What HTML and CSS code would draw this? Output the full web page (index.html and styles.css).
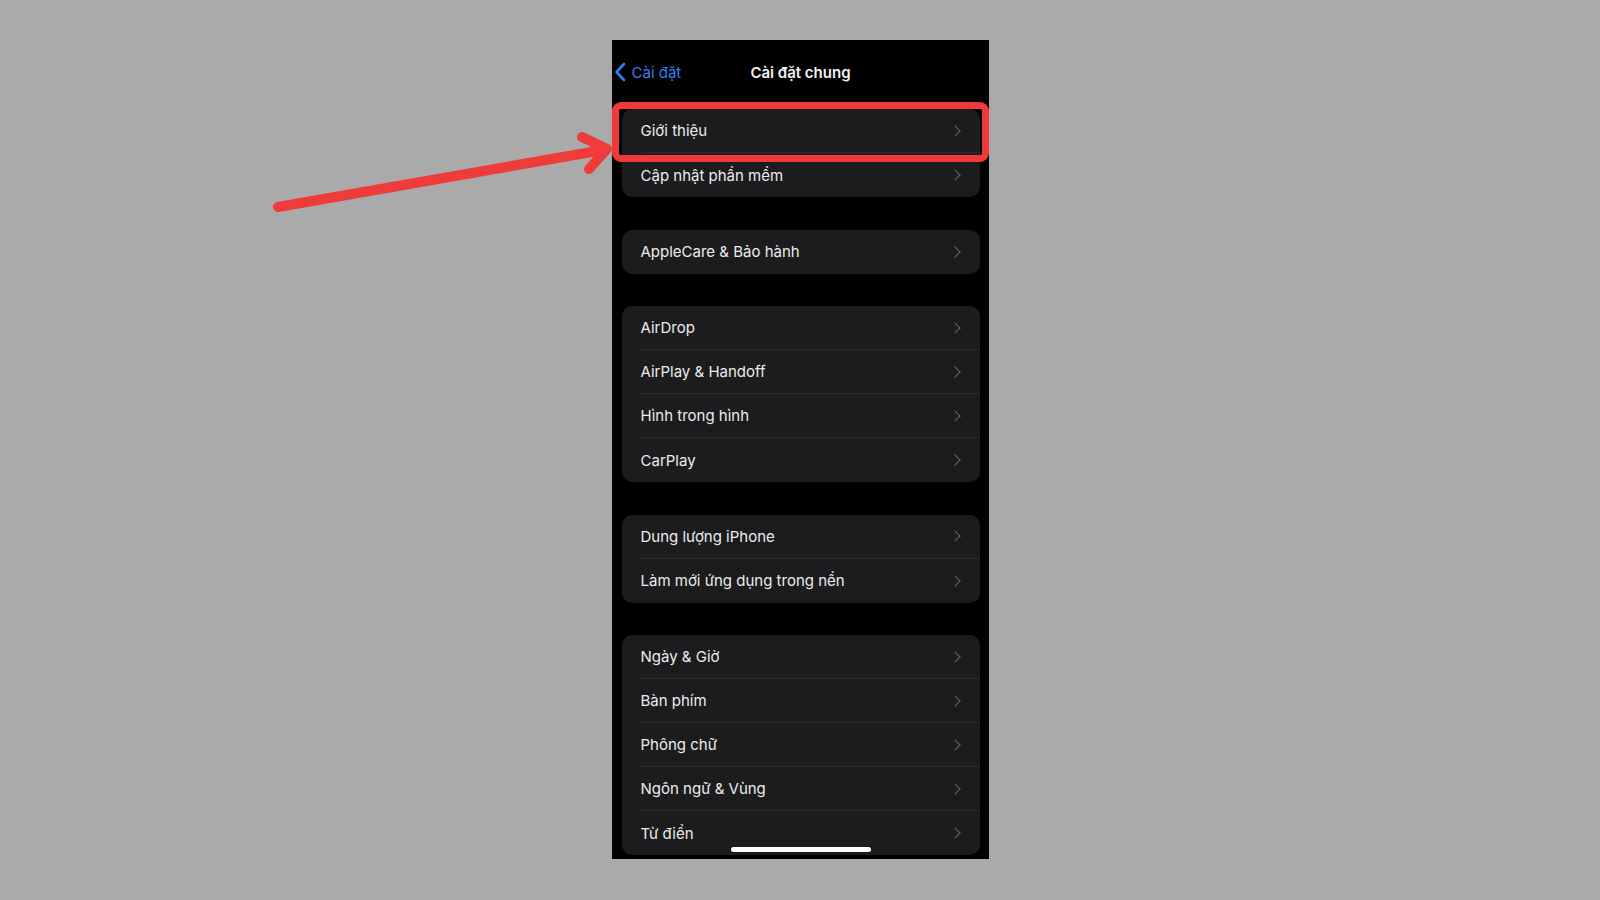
FILE: index.html
```html
<!DOCTYPE html>
<html lang="vi">
<head>
    <meta charset="UTF-8">
    <meta name="viewport" content="width=device-width, initial-scale=1.0">
    <title>Cài đặt chung</title>
    <link rel="stylesheet" href="styles.css">
</head>
<body>
    <div class="phone">
        <div class="nav">
            <div class="back">
                <svg width="12" height="20" viewBox="0 0 12 20"><path d="M10 2 L2.5 10 L10 18" fill="none" stroke="#2f7ff0" stroke-width="2.6" stroke-linecap="round" stroke-linejoin="round"/></svg>
                <span>Cài đặt</span>
            </div>
            <div class="title">Cài đặt chung</div>
        </div>

        <div class="group">
            <div class="row">Giới thiệu</div>
            <div class="row">Cập nhật phần mềm</div>
        </div>
        <div class="group">
            <div class="row">AppleCare &amp; Bảo hành</div>
        </div>
        <div class="group">
            <div class="row">AirDrop</div>
            <div class="row">AirPlay &amp; Handoff</div>
            <div class="row">Hình trong hình</div>
            <div class="row">CarPlay</div>
        </div>
        <div class="group">
            <div class="row">Dung lượng iPhone</div>
            <div class="row">Làm mới ứng dụng trong nền</div>
        </div>
        <div class="group">
            <div class="row">Ngày &amp; Giờ</div>
            <div class="row">Bàn phím</div>
            <div class="row">Phông chữ</div>
            <div class="row">Ngôn ngữ &amp; Vùng</div>
            <div class="row">Từ điển</div>
        </div>

        <div class="highlight"></div>
        <div class="home-bar"></div>
    </div>

    <svg class="arrow" width="1600" height="900" viewBox="0 0 1600 900">
        <line x1="278" y1="207" x2="603" y2="150" stroke="#f03b3b" stroke-width="10" stroke-linecap="round"/>
        <polyline points="582,137 607,149 589,169" fill="none" stroke="#f03b3b" stroke-width="10" stroke-linecap="round" stroke-linejoin="round"/>
    </svg>
</body>
</html>
```

FILE: styles.css
```css
body {
    margin: 0;
    width: 1600px;
    height: 900px;
    background-color: #aaaaaa;
    font-family: Inter, "Noto Sans", sans-serif;
    position: relative;
    overflow: hidden;
}
.phone {
    position: relative;
    width: 377px;
    height: 819px;
    margin: 40px auto 0;
    background-color: #000;
    overflow: hidden;
    box-sizing: border-box;
    padding: 0 9px 0 10px;
}
.nav {
    height: 69px;
    position: relative;
    display: flex;
    align-items: flex-start;
    justify-content: center;
}
.back {
    position: absolute;
    left: -8px;
    top: 22px;
    display: flex;
    align-items: center;
    gap: 6px;
    color: #2f7ff0;
    font-size: 15px;
}
.title {
    margin-top: 23px;
    color: #f2f2f2;
    font-size: 15px;
    font-weight: 600;
}
.group {
    background-color: #1c1c1e;
    border-radius: 10px;
    margin-bottom: 32.6px;
    overflow: hidden;
}
.row {
    height: 44px;
    margin-left: 19px;
    padding-right: 15px;
    display: flex;
    align-items: center;
    justify-content: space-between;
    color: #ececec;
    font-size: 15px;
    border-bottom: 1px solid #2b2b2d;
    box-sizing: border-box;
}
.row:last-child {
    border-bottom: none;
}
.row::after {
    content: "";
    width: 7px;
    height: 7px;
    border-right: 1.6px solid #66666a;
    border-top: 1.6px solid #66666a;
    transform: rotate(45deg);
    margin-right: 6px;
}
.highlight {
    position: absolute;
    left: 0;
    top: 62px;
    width: 377px;
    height: 60px;
    box-sizing: border-box;
    border: 7px solid #ef3a3a;
    border-radius: 9px;
}
.home-bar {
    position: absolute;
    left: 119px;
    bottom: 7px;
    width: 140px;
    height: 5px;
    border-radius: 3px;
    background-color: #fff;
}
.arrow {
    position: absolute;
    left: 0;
    top: 0;
    pointer-events: none;
}
```
